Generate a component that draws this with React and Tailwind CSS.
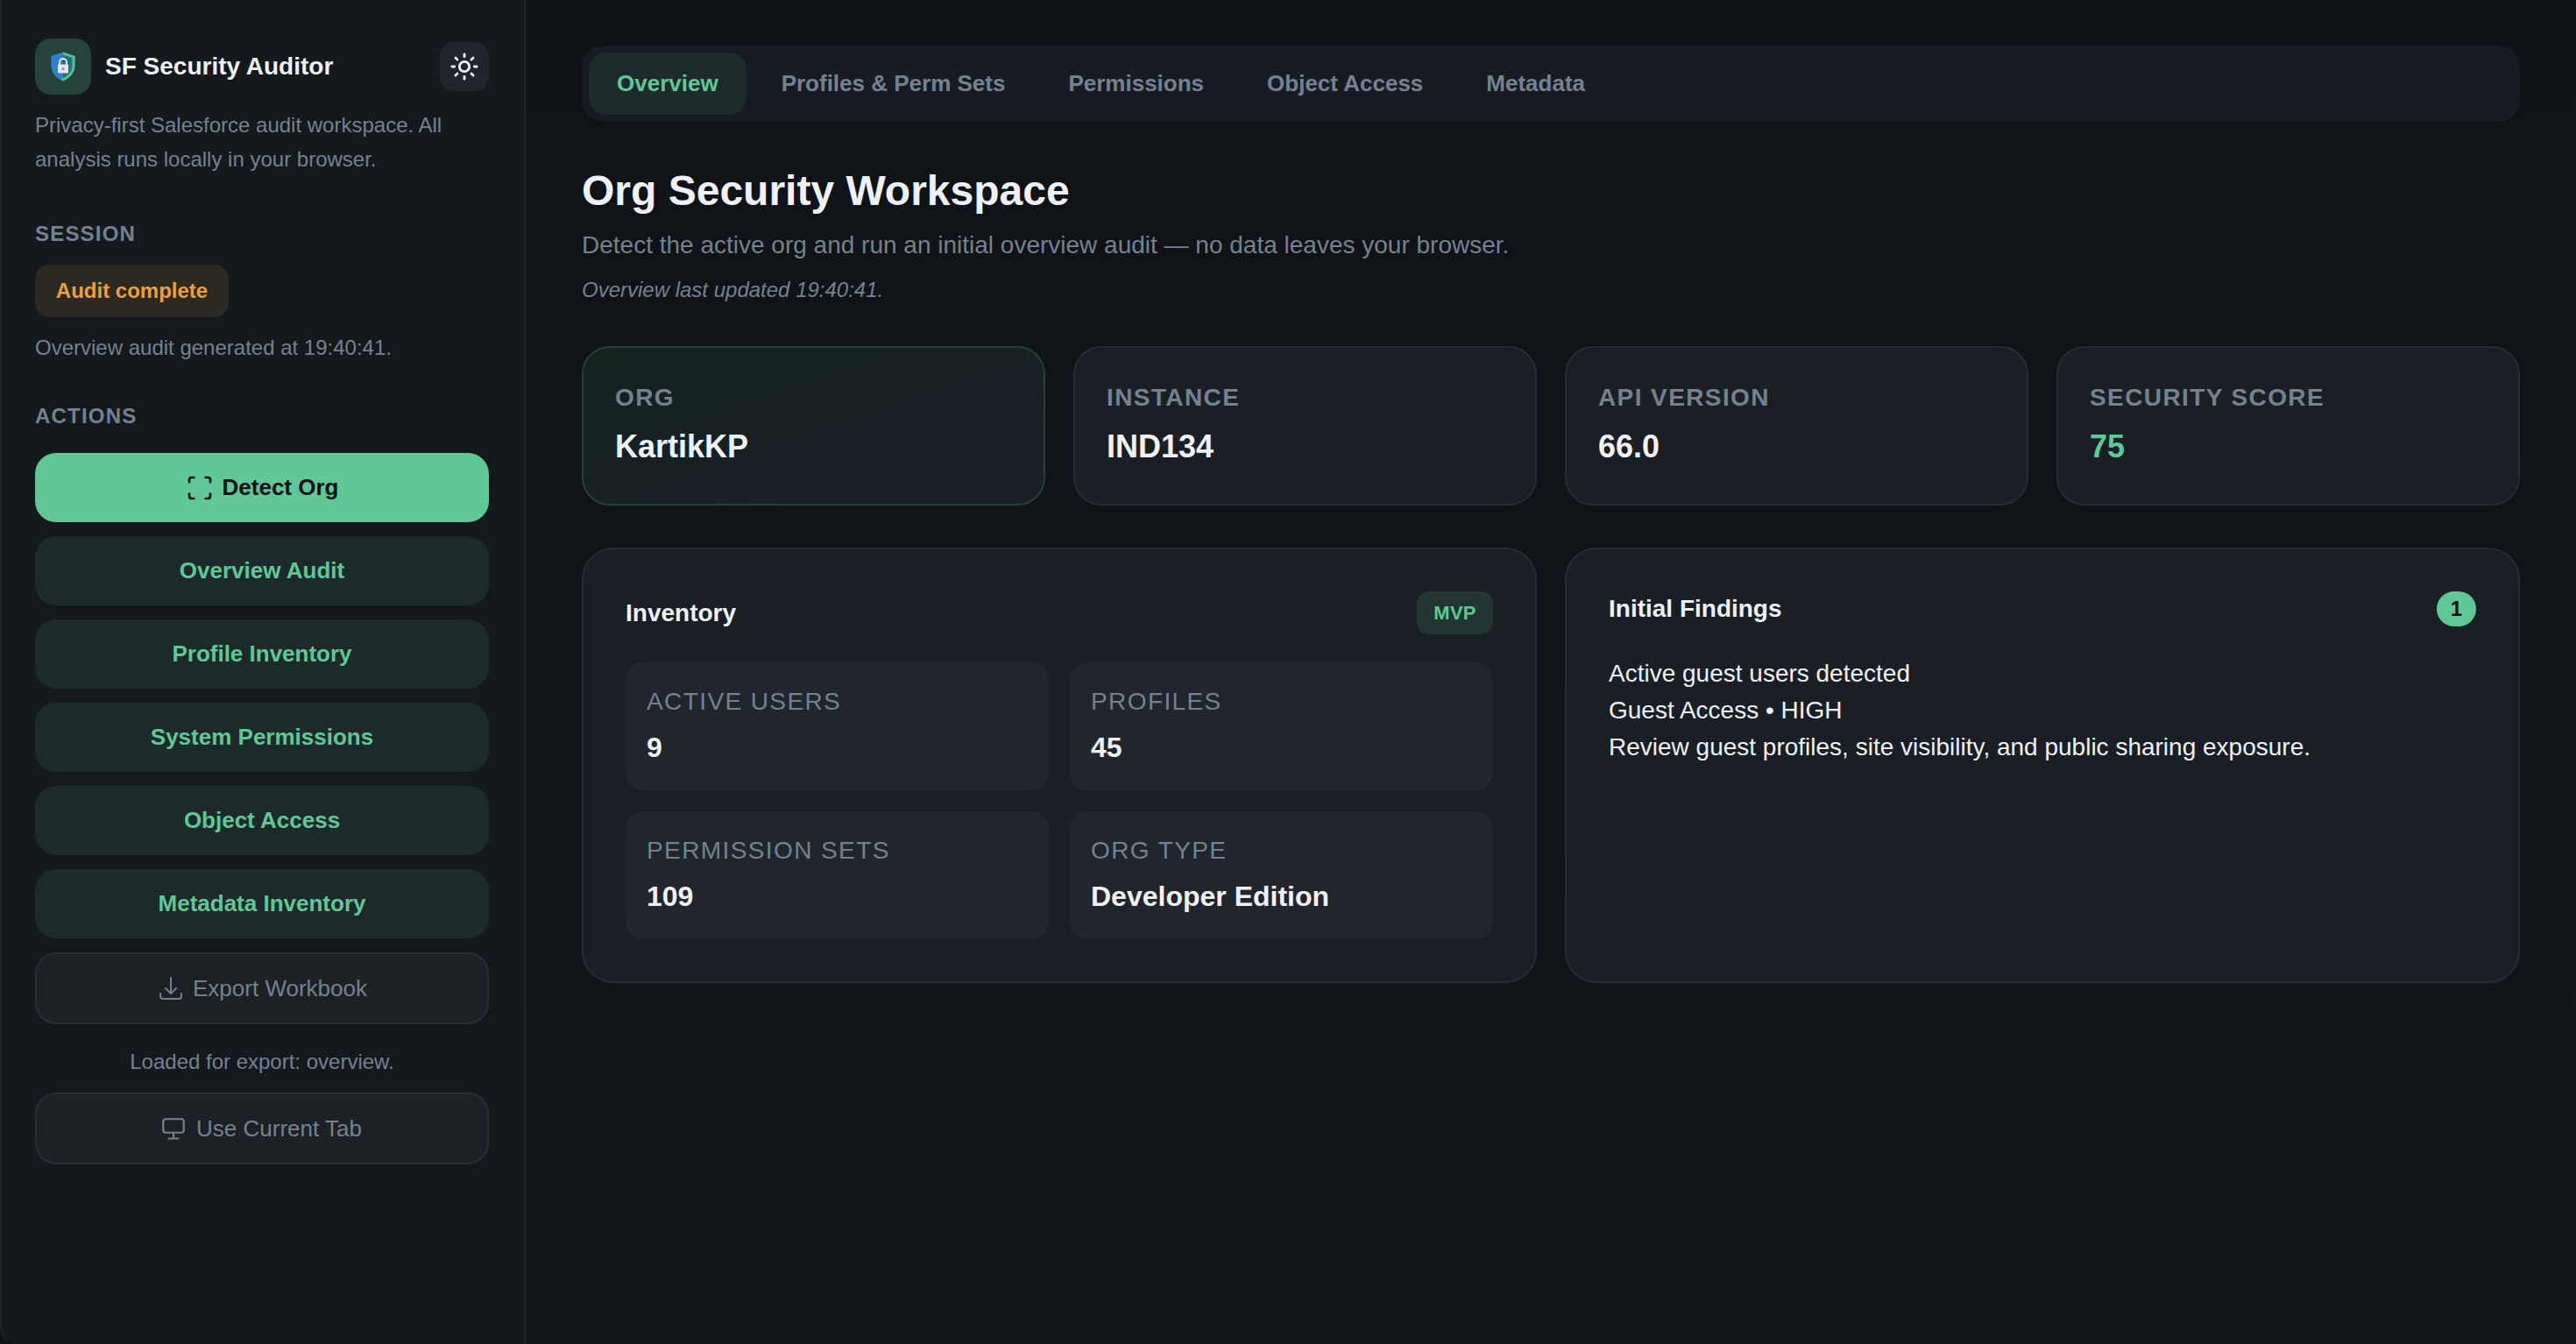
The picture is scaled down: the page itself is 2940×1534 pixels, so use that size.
import React from "react";
import { Sun, Scan } from "lucide-react";
import { HiOutlineArrowDownTray } from "react-icons/hi2";

function Logo() {
  return (
    <div className="flex h-16 w-16 items-center justify-center rounded-[18px] bg-[#25433b]">
      <svg width="28" height="34" viewBox="0 0 28 34" className="blur-[0.5px]">
        <path d="M14 0.5 L27.5 5 V16 C27.5 24 22 30 14 33.5 C6 30 0.5 24 0.5 16 V5 Z" fill="#2f6f7a" />
        <path d="M14 0.5 L0.5 5 V16 C0.5 24 6 30 14 33.5 L14 0.5 Z" fill="#2d80cb" />
        <path d="M14 0.5 L27.5 5 V16 C27.5 24 22 30 14 33.5 L11 31.5 C18 29 24.5 24 24.5 16 V7 L14 3.5 Z" fill="#4fc48f" />
        <path d="M10 15 V12 a4 4 0 0 1 8 0 V15" fill="none" stroke="#e8edf2" strokeWidth="1.8" />
        <rect x="8" y="14.5" width="12" height="10" rx="1.2" fill="#dfe5ea" />
        <circle cx="14" cy="19.5" r="1.5" fill="#7f8e99" />
      </svg>
    </div>
  );
}

function MonitorIcon() {
  return (
    <svg width="26" height="25" viewBox="0 0 26 25" fill="none" stroke="currentColor" strokeWidth="2.2" strokeLinecap="round" strokeLinejoin="round">
      <rect x="1.25" y="1.25" width="23.5" height="15.5" rx="3" />
      <path d="M13 17 V23 M7.5 23.5 H18.5" />
    </svg>
  );
}

function SectionLabel({ children, className }) {
  return <div className={"text-[24px] leading-[32px] font-bold tracking-[1.2px] text-[#748290] " + className}>{children}</div>;
}

function ActionButton({ children }) {
  return (
    <button className="flex h-[79px] w-full items-center justify-center rounded-[24px] bg-[#1d2a2b] text-[26px] font-bold text-[#5fc896]">
      {children}
    </button>
  );
}

function GhostButton({ icon, gap, children }) {
  return (
    <button className={"flex h-[82px] w-full items-center justify-center rounded-[24px] border-2 border-[#282e34] bg-[#1c2126] text-[26px] text-[#748290] " + gap}>
      {icon}
      {children}
    </button>
  );
}

function Stat({ label, value, valueClass = "text-[#eef1f5]", className = "border-[#262c33] bg-[#1a1f26]" }) {
  return (
    <div className={"h-[182px] rounded-[32px] border-2 px-[36px] pt-[39px] " + className}>
      <div className="text-[28px] leading-[36px] font-bold tracking-[1.4px] text-[#748290]">{label}</div>
      <div className={"mt-[14px] text-[36px] leading-[48px] font-bold " + valueClass}>{value}</div>
    </div>
  );
}

function Metric({ label, value }) {
  return (
    <div className="h-[146px] rounded-[20px] bg-[#20262c] px-[24px] pt-[25px]">
      <div className="text-[28px] leading-[40px] tracking-[1.4px] text-[#748290]">{label}</div>
      <div className="mt-[10px] text-[32px] leading-[44px] font-bold text-[#eef1f5]">{value}</div>
    </div>
  );
}

const tabs = ["Profiles & Perm Sets", "Permissions", "Object Access", "Metadata"];

export default function App() {
  return (
    <div className="flex h-[1534px] w-[2940px] overflow-hidden bg-[#0f1216] font-['Liberation_Sans',Arial,sans-serif]">
      <aside className="h-full w-[600px] shrink-0 rounded-bl-[20px] border-r-2 border-l-2 border-[#20262c] bg-[#14191e] pt-[44px] pl-[38px]">
        <div className="w-[518px]">
          <div className="flex h-16 items-center">
            <Logo />
            <div className="ml-4 text-[28px] font-bold text-[#eef1f5]">SF Security Auditor</div>
            <button className="ml-auto flex h-14 w-14 items-center justify-center rounded-[16px] bg-[#1f252a] text-[#eef1f5]">
              <Sun size={34} strokeWidth={2} />
            </button>
          </div>
          <p className="mt-[15px] text-[24px] leading-[39px] text-[#748290]">
            Privacy-first Salesforce audit workspace. All analysis runs locally in your browser.
          </p>
          <SectionLabel className="mt-[50px]">SESSION</SectionLabel>
          <div className="mt-[19px] flex h-[60px] w-[221px] items-center justify-center rounded-[16px] bg-[#2c2822] text-[24px] font-bold text-[#e9a23b]">
            Audit complete
          </div>
          <p className="mt-[17px] text-[24px] leading-[36px] text-[#748290]">Overview audit generated at 19:40:41.</p>
          <SectionLabel className="mt-[44px]">ACTIONS</SectionLabel>
          <div className="mt-[26px] flex flex-col gap-4">
            <button className="flex h-[79px] w-full items-center justify-center gap-[10px] rounded-[24px] bg-[#5fc896] text-[26px] font-bold text-[#0f1216]">
              <Scan size={32} strokeWidth={2} />
              Detect Org
            </button>
            <ActionButton>Overview Audit</ActionButton>
            <ActionButton>Profile Inventory</ActionButton>
            <ActionButton>System Permissions</ActionButton>
            <ActionButton>Object Access</ActionButton>
            <ActionButton>Metadata Inventory</ActionButton>
            <GhostButton gap="gap-[9px]" icon={<HiOutlineArrowDownTray size={32} />}>Export Workbook</GhostButton>
          </div>
          <p className="mt-[28px] text-center text-[24px] leading-[30px] text-[#748290]">Loaded for export: overview.</p>
          <div className="mt-[20px]">
            <GhostButton gap="gap-[13px]" icon={<MonitorIcon />}>Use Current Tab</GhostButton>
          </div>
        </div>
      </aside>

      <main className="min-w-0 flex-1 bg-gradient-to-b from-[#0f1216] to-[#12161a] pt-[52px] pr-[64px] pl-[64px]">
        <nav className="flex h-[87px] items-center gap-2 rounded-[24px] bg-[#171b22] px-2">
          <button className="flex h-[71px] items-center rounded-[20px] bg-[#1d2a2b] px-[32px] text-[26px] font-bold text-[#5fc896]">Overview</button>
          {tabs.map((t) => (
            <button key={t} className="flex h-[71px] items-center rounded-[20px] px-[32px] text-[26px] font-bold text-[#748290]">{t}</button>
          ))}
        </nav>

        <h1 className="mt-[47px] text-[48px] leading-[64px] font-bold text-[#eef1f5]">Org Security Workspace</h1>
        <p className="mt-[9px] text-[28px] leading-[42px] text-[#748290]">
          Detect the active org and run an initial overview audit — no data leaves your browser.
        </p>
        <p className="mt-[12px] text-[24px] leading-[36px] text-[#748290] italic">Overview last updated 19:40:41.</p>

        <div className="mt-[46px] grid grid-cols-4 gap-8">
          <Stat label="ORG" value="KartikKP" className="border-[#264039] bg-gradient-to-br from-[#14221f] to-[#1a1f28]" />
          <Stat label="INSTANCE" value="IND134" />
          <Stat label="API VERSION" value="66.0" />
          <Stat label="SECURITY SCORE" value="75" valueClass="text-[#5fc896]" />
        </div>

        <div className="mt-[48px] grid grid-cols-2 gap-8">
          <section className="h-[497px] rounded-[36px] border-2 border-[#262c33] bg-[#1a1f26] p-[48px]">
            <div className="flex h-[49px] items-center justify-between">
              <h2 className="text-[28px] font-bold text-[#eef1f5]">Inventory</h2>
              <span className="flex h-[49px] w-[87px] items-center justify-center rounded-[14px] bg-[#223532] text-[22px] font-bold tracking-[0.2px] text-[#5fc896]">MVP</span>
            </div>
            <div className="mt-[32px] grid grid-cols-2 gap-6">
              <Metric label="ACTIVE USERS" value="9" />
              <Metric label="PROFILES" value="45" />
              <Metric label="PERMISSION SETS" value="109" />
              <Metric label="ORG TYPE" value="Developer Edition" />
            </div>
          </section>
          <section className="h-[497px] rounded-[36px] border-2 border-[#262c33] bg-[#1a1f26] p-[48px]">
            <div className="flex h-10 items-center justify-between">
              <h2 className="text-[28px] font-bold text-[#eef1f5]">Initial Findings</h2>
              <span className="flex h-10 w-[45px] items-center justify-center rounded-full bg-[#5fc896] text-[24px] font-bold text-[#0f1216]">1</span>
            </div>
            <div className="mt-[33px] text-[28px] leading-[42px] text-[#eef1f5]">
              <div>Active guest users detected</div>
              <div>Guest Access • HIGH</div>
              <div>Review guest profiles, site visibility, and public sharing exposure.</div>
            </div>
          </section>
        </div>
      </main>
    </div>
  );
}
